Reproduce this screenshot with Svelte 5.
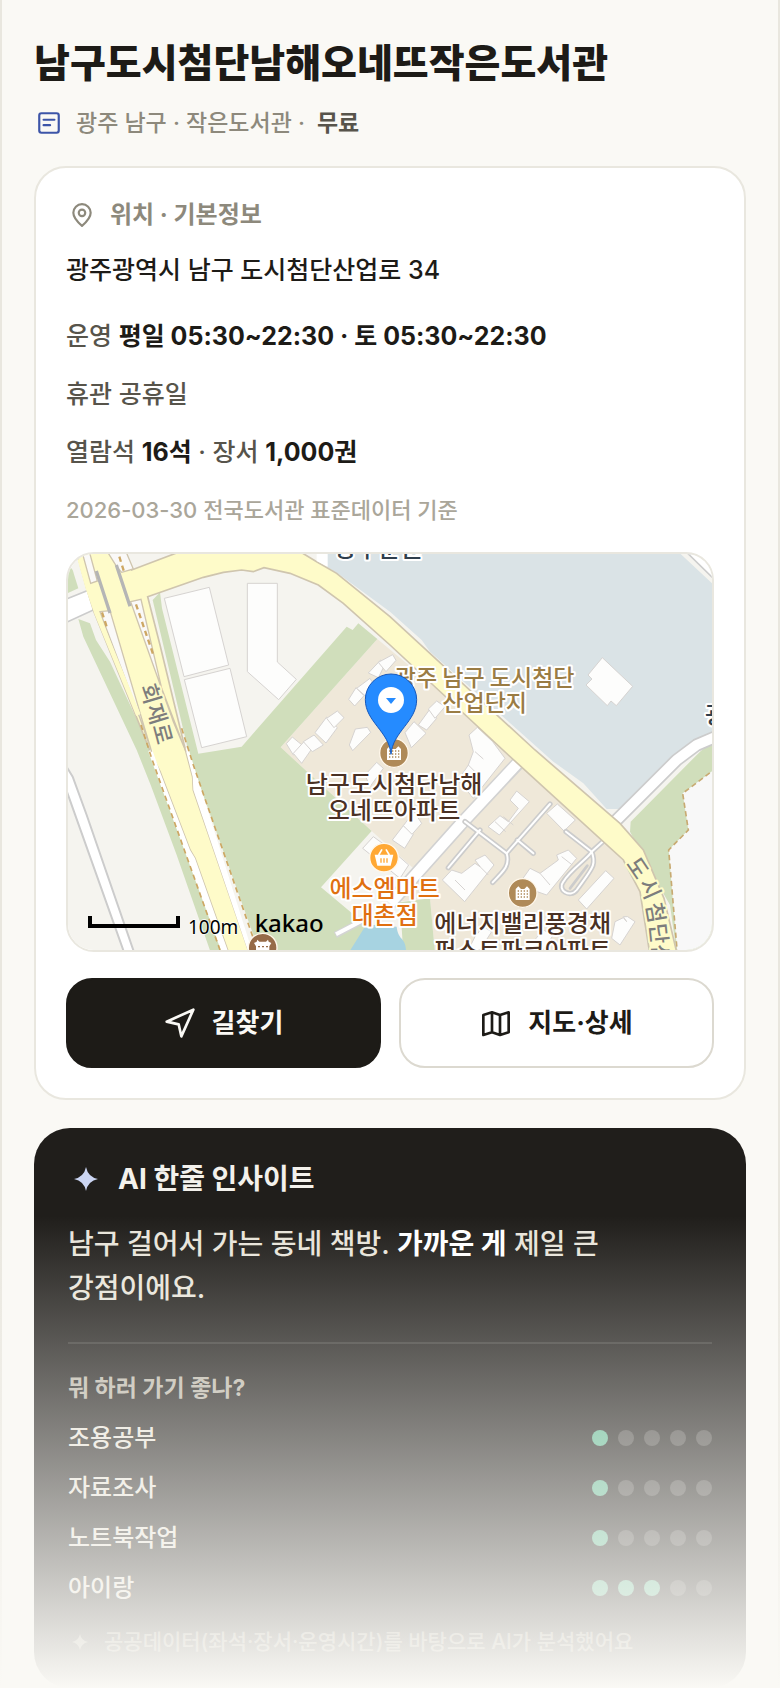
<script>
    const library = {
        name: '남구도시첨단남해오네뜨작은도서관',
        meta: '광주 남구 · 작은도서관 ·',
        price: '무료',
        address: '광주광역시 남구 도시첨단산업로 34',
        source: '2026-03-30 전국도서관 표준데이터 기준'
    };

    const ratings = [
        { label: '조용공부', score: 1 },
        { label: '자료조사', score: 1 },
        { label: '노트북작업', score: 1 },
        { label: '아이랑', score: 3 }
    ];

    const buildings = [
        '313,160 448,127 506,360 372,395',
        '373,404 510,370 560,575 425,608',
        '562,115 652,115 652,351 709,403 656,464 562,380',
        '1584,390 1627,338 1718,424 1669,482 1653,468 1642,482 1578,420 1596,402',
        '679,596 697,576 716,592 732,604 700,630',
        '700,625 732,590 755,612 725,655',
        '730,590 762,570 790,600 757,620',
        '765,563 800,516 832,548 798,594', '800,520 832,498 852,518 822,548',
        '866,463 888,428 912,452 884,483', '890,430 930,400 945,424 915,452',
        '925,384 962,345 975,358 955,398', '955,352 998,329 1008,346 978,380',
        '868,600 886,552 922,547 932,562 878,617',
        '1035,563 1062,530 1098,565 1054,608', '1075,540 1110,492 1130,520 1100,555',
        '1105,492 1130,468 1155,485 1125,520',
        '1227,570 1252,547 1298,590 1335,640 1240,760 1195,705 1225,660 1240,620',
        '915,690 950,652 970,670 930,725',
        '997,885 1030,842 1060,868 1034,910', '1030,842 1062,800 1085,835 1056,868',
        '1284,845 1320,812 1345,830 1375,790 1350,765 1370,738 1408,770 1318,870',
        '1460,805 1492,777 1546,825 1512,858',
        '1147,1005 1175,975 1205,985 1245,955 1260,965 1245,945 1275,930 1302,960 1214,1070',
        '1375,1020 1410,970 1440,985 1495,945 1490,930 1525,915 1550,940 1460,1050',
        '1555,1065 1637,977 1662,1000 1580,1092',
        '1665,1130 1690,1118 1700,1130 1690,1115 1703,1115 1725,1130 1680,1200 1655,1180',
        '908,910 940,875 995,915 1046,960 1020,1000',
        '1245,1175 1270,1145 1295,1160 1260,1215 1225,1215',
        '1415,1195 1450,1155 1480,1170 1450,1215'
    ];

    const lanes = [
        'M1165 968 1260 855',
        'M1215 830 1340 925 1470 777',
        'M1372 885 1420 925',
        'M1340 925C1350 960 1335 975 1298 1012',
        'M1518 860 1595 920 1628 890',
        'M1595 920C1610 960 1598 968 1550 1035 1530 1060 1490 1035 1510 1010 1530 975 1590 935 1595 920'
    ];

    const placeLabels = [
        { x: 955, y: 36, text: '광주분원', kind: 'navy' },
        { x: 1968, y: 538, text: '광', kind: 'navy' },
        { x: 1274, y: 424, text: '광주 남구 도시첨단', kind: 'area' },
        { x: 1274, y: 499, text: '산업단지', kind: 'area' },
        { x: 1002, y: 744, text: '남구도시첨단남해', kind: 'apt' },
        { x: 1002, y: 822, text: '오네뜨아파트', kind: 'apt' },
        { x: 974, y: 1056, text: '에스엠마트', kind: 'shop' },
        { x: 974, y: 1136, text: '대촌점', kind: 'shop' },
        { x: 1388, y: 1162, text: '에너지밸리풍경채', kind: 'apt' },
        { x: 1388, y: 1241, text: '퍼스트파크아파트', kind: 'apt' }
    ];

    const roadLabels = [
        { x: 270, y: 447, turn: 73, text: '회' },
        { x: 288, y: 507, turn: 73, text: '재' },
        { x: 306, y: 567, turn: 75, text: '로' },
        { x: 1732, y: 970, turn: 56, text: '도' },
        { x: 1768, y: 1032, turn: 66, text: '시' },
        { x: 1785, y: 1103, turn: 80, text: '첨' },
        { x: 1794, y: 1166, turn: 84, text: '단' },
        { x: 1800, y: 1228, turn: 86, text: '산' }
    ];

    const sparkle = 'M12 0Q14 10 24 12 14 14 12 24 10 14 0 12 10 10 12 0Z';
</script>

<main class="page">
    <header>
        <h1>{library.name}</h1>
        <p class="meta">
            <span class="meta-icon">
                <svg viewBox="0 0 24 24" width="26" height="26" fill="none" stroke="currentColor" stroke-width="2" stroke-linecap="round" stroke-linejoin="round">
                    <rect x="3" y="3" width="18" height="18" rx="2" />
                    <path d="M7 9h10M7 14h6" />
                </svg>
            </span>
            <span>{library.meta}</span>
            <strong>{library.price}</strong>
        </p>
    </header>

    <section class="card">
        <h2>
            <span class="head-icon">
                <svg viewBox="0 0 24 24" width="26" height="26" fill="none" stroke="currentColor" stroke-width="2" stroke-linecap="round" stroke-linejoin="round">
                    <path d="M20 10c0 5-5 9.500-8 12-3-2.500-8-7-8-12a8 8 0 0 1 16 0Z" />
                    <circle cx="12" cy="10" r="3" />
                </svg>
            </span>
            위치 · 기본정보
        </h2>
        <p class="address">{library.address}</p>
        <div class="facts">
            <p>운영 <b>평일 05:30~22:30 · 토 05:30~22:30</b></p>
            <p>휴관 공휴일</p>
            <p>열람석 <b>16석</b> · 장서 <b>1,000권</b></p>
            <p class="source">{library.source}</p>
        </div>

        <div class="map">
            <svg viewBox="24 27 1932 1188" preserveAspectRatio="xMidYMid slice" role="img" aria-label="지도">
                <rect x="24" y="27" width="1932" height="1188" fill="#f5f4ef" />

                <!-- industrial complex -->
                <path fill="#dae3e6" d="M800 27H1862L1956 115V560L1890 595 1850 635 1695 792H1640L1570 715 1480 650 1110 320 1085 285 990 200 840 90 800 65Z" />
                <path fill="#fff" stroke="#ccc" stroke-width="5" d="M1885 27 1970 110V20Z" />

                <!-- housing blocks -->
                <path fill="#efe8d9" d="M952 282 662 607 935 858 1060 970 1010 1070 1110 1060 1125 1225H1790L1740 1000 1400 655Z" />

                <!-- green belts -->
                <g fill="#d0debb">
                    <path d="M24 58 38 75 55 130 24 144Z" />
                    <path d="M55 222 90 235 108 285 150 350 285 640 495 1225H453L350 930 272 720 230 615 70 275Z" />
                    <path d="M278 165 300 142 306 190 415 626 545 605 860 245 878 255 895 235 952 282 662 607 935 858 783 1027 930 1150 875 1225H600L390 640Z" />
                    <path d="M1020 1072 1110 1060 1125 1225H1030Z" />
                    <path d="M1956 590 1920 620 1712 830 1710 860 1790 1010 1830 1080 1850 1225H1956Z" />
                </g>
                <path fill="#f8f8f8" stroke="#c8aa72" stroke-width="5" stroke-dasharray="16 10" d="M1970 668 1868 745 1885 855 1826 915 1852 1225H1970Z" />
                <path fill="#a7d3e1" d="M912 1150C940 1130 980 1145 1010 1145 1015 1190 1040 1175 1038 1225H865Z" />
                <path stroke="#d4d4d4" stroke-width="20" d="M826 1170 920 1120" />
                <path stroke="#fff" stroke-width="12" d="M828 1168 920 1120" />

                <!-- buildings -->
                <g fill="#fdfdfc" stroke="#d6d3d1" stroke-width="3">
                    {#each buildings as points}
                        <polygon {points} />
                    {/each}
                </g>
                <path stroke="#d6d3d1" stroke-width="3" d="M1245 620l25 22M1225 660l30 30M1210 690l30 32M1305 830l32 30M1330 815l30 25M1185 1005l30 30M1255 960l30 30M1440 985l30 35M1505 935l32 25" />

                <!-- white roads -->
                <path fill="#fff" stroke="#ccc" stroke-width="6" d="M10 650 38 695 80 810 225 1230H195L10 710Z" />
                <path fill="#fff" stroke="#ccc" stroke-width="5" d="M10 166 100 130V195L10 236Z" />
                <g fill="none" stroke-linejoin="round">
                    <path stroke="#d2d2d2" stroke-width="42" d="M1378 650 1200 840 990 1075" />
                    <path stroke="#fff" stroke-width="32" d="M1390 636 1200 840 990 1075" />
                    <path stroke="#ccc" stroke-width="40" d="M1660 835 1850 645 1910 600 1980 570" />
                    <path stroke="#fff" stroke-width="30" d="M1660 835 1850 645 1910 600 1980 570" />
                    <g stroke="#ccc" stroke-width="16" stroke-linecap="round">
                        {#each lanes as d}<path {d} />{/each}
                        <path stroke-width="8" d="M1530 1030 1582 962" />
                    </g>
                    <g stroke="#fff" stroke-width="6" stroke-linecap="round">
                        {#each lanes as d}<path {d} />{/each}
                    </g>
                </g>

                <!-- yellow roads -->
                <path fill="#fefbc9" stroke="#cfc5ae" stroke-width="5" d="M50 20 80 130 102 200 275 630 300 680 390 915 405 940 508 1230H570L400 735 398 695 375 610 300 300 263 155 430 97 490 82 545 75 580 80 612 68 690 85 775 120 850 175 990 300 1345 630 1690 945 1740 1040 1770 1230H1852L1812 1060 1750 915 1680 835 1425 615 990 215 830 85 770 50 720 20H360L215 75 195 20Z" />
                <path fill="#fff" d="M770 20V48L803 65V20Z" />
                <path fill="#fff" d="M275 610 265 620 488 1230H508L405 940 390 915 300 680ZM376 610 398 695 400 735 568 1230H580L385 610Z" />
                <g fill="#faf9f8" stroke="#cfc5ae" stroke-width="4">
                    <path d="M66 20 92 115 112 108 88 20Z" />
                    <path d="M142 20 170 65 185 82 220 72 198 20Z" />
                    <path d="M120 200 150 197 245 520 275 620 240 520Z" />
                    <path d="M212 170 243 163 305 430 378 620 340 530Z" />
                </g>
                <path fill="none" stroke="#fefbc9" stroke-width="14" d="M53 20 84 130 110 205 235 510" />
                <g fill="none" stroke="#cda763" stroke-width="7" stroke-dasharray="16 12">
                    <path d="M178 35 192 80M126 202 140 245M228 178 280 330" />
                    <path stroke-width="5" d="M243 540 275 640 480 1215M365 550 400 660 580 1180" />
                </g>
                <path stroke="#b5b5b5" stroke-width="10" d="M109 78 150 204M169 60 210 184" />

                {#each roadLabels as l}
                    <text class="road" text-anchor="middle" transform="translate({l.x} {l.y}) rotate({l.turn})" y="22">{l.text}</text>
                {/each}

                {#each placeLabels as l}
                    <text class={l.kind} text-anchor="middle" x={l.x} y={l.y}>{l.text}</text>
                {/each}

                <!-- apartment markers -->
                {#each [[1002, 624], [1388, 1044]] as [x, y]}
                    <g transform="translate({x} {y})">
                        <circle r="43" fill="#af8a58" stroke="#fff8ec" stroke-width="4" />
                        <path fill="#fff" d="M-21 21V-12L-13-20-5-12H5L13-20 21-12V21Z" />
                        <path stroke="#af8a58" stroke-width="4" stroke-dasharray="4 5" d="M-15-6H18M-15 3H18M-15 12H18" />
                    </g>
                {/each}
                <g transform="translate(972 938)">
                    <circle r="43" fill="#ffa834" stroke="#fff8ec" stroke-width="4" />
                    <path fill="#fff" d="M-28-9H28L20 24H-20Z" />
                    <path fill="none" stroke="#fff" stroke-width="5" d="M-16-8-6-25M16-8 6-25" />
                    <path stroke="#ffa834" stroke-width="4" d="M-9 2V15M0 2V15M9 2V15" />
                </g>
                <g transform="translate(608 1208)">
                    <circle r="43" fill="#966b48" stroke="#fff8ec" stroke-width="4" />
                    <path fill="#fff" d="M-26-14-18-18-16-24-10-18H10L16-24 18-18 26-14 20-4V20H-20V-4Z" />
                    <path stroke="#966b48" stroke-width="4" stroke-dasharray="6 6" d="M-14-3H16" />
                </g>

                <!-- current library pin -->
                <path fill="#258bff" stroke="#1659bd" stroke-width="3" d="M993 628C988 560 916 530 916 464A77 77 0 0 1 1070 464C1070 530 998 560 993 628Z" />
                <circle cx="993" cy="465" r="39" fill="#fff" />
                <path fill="#258bff" d="M978 459H1008L993 477Z" />

                <path fill="none" stroke="#000" stroke-width="12" d="M90 1113V1143H354V1113" />
                <text class="scale" x="384" y="1167">100m</text>
                <text class="brand" x="584" y="1160">kakao</text>
            </svg>
        </div>

        <div class="actions">
            <button type="button" class="primary">
                <svg viewBox="0 0 24 24" width="32" height="32" fill="none" stroke="currentColor" stroke-width="2" stroke-linejoin="round">
                    <path d="M2 11 22 2 13 22 11 13Z" />
                </svg>
                길찾기
            </button>
            <button type="button">
                <svg viewBox="0 0 24 24" width="32" height="32" fill="none" stroke="currentColor" stroke-width="2" stroke-linejoin="round">
                    <path d="M2.500 6 9 4l6 2 6.500-2v15L15 21l-6-2-6.500 2ZM9 4v15M15 6v15" />
                </svg>
                지도·상세
            </button>
        </div>
    </section>

    <section class="insight">
        <h2>
            <svg class="spark" viewBox="0 0 24 24" width="36" height="24" fill="currentColor"><path d={sparkle} /></svg>
            AI 한줄 인사이트
        </h2>
        <p class="summary">남구 걸어서 가는 동네 책방. <b>가까운 게</b> 제일 큰 강점이에요.</p>
        <h3>뭐 하러 가기 좋나?</h3>
        <ul>
            {#each ratings as r}
                <li>
                    <span>{r.label}</span>
                    <span class="dots">
                        {#each [1, 2, 3, 4, 5] as n}
                            <i class:on={n <= r.score}></i>
                        {/each}
                    </span>
                </li>
            {/each}
        </ul>
        <p class="note">
            <svg viewBox="0 0 24 24" width="24" height="16" fill="currentColor"><path d={sparkle} /></svg>
            공공데이터(좌석·장서·운영시간)를 바탕으로 AI가 분석했어요
        </p>
    </section>
    <div class="fade"></div>
</main>

<style>
    :global(body) {
        background: #faf9f5;
    }
    .page {
        position: relative;
        box-sizing: border-box;
        min-height: 100vh;
        padding: 36px 32px 0;
        border: solid #e9e7df;
        border-width: 0 2px;
        color: #1d1b17;
        font-family: Inter, "Noto Sans CJK KR", sans-serif;
        font-weight: 500;
        word-break: keep-all;
    }
    h1, h2, h3, p, ul {
        margin: 0;
        padding: 0;
    }
    svg {
        flex: none;
    }
    h1 {
        font-size: 39px;
        line-height: 54px;
        font-weight: 800;
    }
    .meta {
        display: flex;
        align-items: center;
        gap: 12px;
        margin-top: 16px;
        color: #8d897c;
        font-size: 23px;
        line-height: 34px;
    }
    .meta strong {
        color: #57544b;
        font-weight: 700;
    }
    .meta-icon, .head-icon {
        display: flex;
        justify-content: center;
        width: 30px;
        color: #3d55a8;
    }
    .head-icon {
        width: 32px;
        color: inherit;
    }
    .card {
        margin-top: 26px;
        padding: 30px;
        border: 2px solid #e9e7df;
        border-radius: 32px;
        background: #fff;
    }
    h2 {
        display: flex;
        align-items: center;
    }
    .card h2 {
        gap: 12px;
        color: #8d897c;
        font-size: 24px;
        line-height: 34px;
        font-weight: 700;
    }
    .address {
        margin-top: 18px;
        font-size: 25px;
        line-height: 40px;
    }
    .facts {
        display: flex;
        flex-direction: column;
        gap: 20px;
        margin-top: 27px;
        color: #57544b;
        font-size: 25px;
        line-height: 38px;
    }
    .facts b {
        color: #1d1b17;
        font-weight: 700;
    }
    .facts .source {
        color: #aaa69a;
        font-size: 22px;
    }
    .map {
        overflow: hidden;
        margin-top: 23px;
        border: 2px solid #e9e7df;
        border-radius: 28px;
    }
    .map svg {
        display: block;
        width: 100%;
    }
    .map text {
        font-family: "Noto Sans CJK KR", sans-serif;
        font-size: 72px;
        font-weight: 500;
        paint-order: stroke;
        stroke: #fff;
        stroke-width: 12px;
        stroke-linejoin: round;
    }
    .map .navy {
        fill: #2f3e4c;
    }
    .map .area {
        fill: #9a7c44;
        font-size: 69px;
    }
    .map .apt {
        fill: #4a3124;
    }
    .map .shop {
        fill: #e07010;
    }
    .map .road {
        fill: #7d7d7d;
        stroke: #fefbc9;
        font-size: 66px;
    }
    .map .scale {
        font-family: "Noto Sans", sans-serif;
        font-size: 57px;
        font-weight: 400;
        stroke-width: 4px;
    }
    .map .brand {
        font-family: "Noto Sans", sans-serif;
        font-size: 72px;
        stroke: none;
    }
    .actions {
        display: grid;
        grid-template-columns: 1fr 1fr;
        gap: 18px;
        margin-top: 26px;
    }
    button {
        display: flex;
        align-items: center;
        justify-content: center;
        gap: 16px;
        height: 90px;
        padding: 0;
        border: 2px solid #dcd9d0;
        border-radius: 26px;
        background: #fff;
        color: #1d1b17;
        font: 700 26px/34px Inter, "Noto Sans CJK KR", sans-serif;
    }
    button.primary {
        border-color: #1d1b17;
        background: #1d1b17;
        color: #faf9f5;
    }
    .insight {
        margin-top: 28px;
        padding: 32px 34px 29px;
        border-radius: 36px;
        background: #201e1b;
        color: #e8e4da;
    }
    .insight h2 {
        gap: 14px;
        color: #f3f1ec;
        font-size: 28px;
        line-height: 38px;
        font-weight: 700;
    }
    .spark {
        color: #cbd5f2;
    }
    .summary {
        padding: 24px 80px 32px 0;
        border-bottom: 2px solid #383633;
        font-size: 28px;
        line-height: 44px;
    }
    .summary b {
        color: #fff;
        font-weight: 700;
    }
    h3 {
        margin: 27px 0 8px;
        color: #bab5a8;
        font-size: 23px;
        line-height: 34px;
        font-weight: 700;
    }
    li {
        display: flex;
        align-items: center;
        justify-content: space-between;
        height: 50px;
        font-size: 24px;
        line-height: 34px;
    }
    .dots {
        display: flex;
        gap: 10px;
    }
    i {
        width: 16px;
        height: 16px;
        border-radius: 50%;
        background: #4b4946;
    }
    i.on {
        background: #5fb892;
    }
    .note {
        display: flex;
        align-items: center;
        gap: 12px;
        margin-top: 12px;
        color: #8d897c;
        font-size: 21px;
        line-height: 34px;
    }
    .fade {
        position: absolute;
        inset: auto -2px 0;
        height: 472px;
        background: linear-gradient(rgba(250, 249, 245, 0), #faf9f5);
        pointer-events: none;
    }
</style>
